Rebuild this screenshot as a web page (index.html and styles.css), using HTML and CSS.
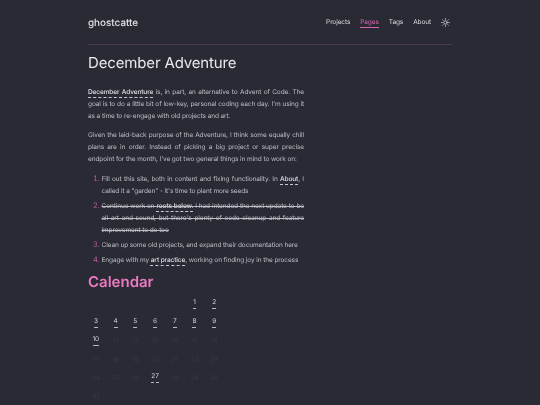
FILE: index.html
```html
<!DOCTYPE html>
<html lang="en">
<head>
<meta charset="utf-8">
<title>December Adventure</title>
<link rel="stylesheet" href="styles.css">
</head>
<body>
<div class="page">
  <header class="top">
    <a class="brand">ghostcatte</a>
    <nav class="nav">
      <a>Projects</a>
      <a class="current">Pages</a>
      <a>Tags</a>
      <a>About</a>
      <svg class="sun" viewBox="0 0 24 24" fill="none" stroke="currentColor" stroke-width="2" stroke-linecap="round"><circle cx="12" cy="12" r="4.5"/><path d="M12 1.5v2M12 20.5v2M1.5 12h2M20.5 12h2M4.6 4.6l1.4 1.4M18 18l1.4 1.4M4.6 19.4L6 18M18 6l1.4-1.4"/></svg>
    </nav>
  </header>
  <main class="content">
    <h1>December Adventure</h1>
    <p><a class="link">December Adventure</a> is, in part, an alternative to Advent of Code. The goal is to do a little bit of low-key, personal coding each day. I'm using it as a time to re-engage with old projects and art.</p>
    <p>Given the laid-back purpose of the Adventure, I think some equally chill plans are in order. Instead of picking a big project or super precise endpoint for the month, I've got two general things in mind to work on:</p>
    <ol>
      <li>Fill out this site, both in content and fixing functionality. In <a class="link">About</a>, I called it a "garden" - it's time to plant more seeds</li>
      <li><s>Continue work on <a class="link">roots below.</a> I had intended the next update to be all art and sound, but there's plenty of code cleanup and feature improvement to do too</s></li>
      <li>Clean up some old projects, and expand their documentation here</li>
      <li>Engage with my <a class="link">art practice</a>, working on finding joy in the process</li>
    </ol>
    <h2>Calendar</h2>
    <div class="calendar">
      <span></span><span></span><span></span><span></span><span></span>
      <a class="day">1</a><a class="day">2</a>
      <a class="day">3</a><a class="day">4</a><a class="day">5</a><a class="day">6</a><a class="day">7</a><a class="day">8</a><a class="day">9</a>
      <a class="day">10</a><span>11</span><span>12</span><span>13</span><span>14</span><span>15</span><span>16</span>
      <span>17</span><span>18</span><span>19</span><span>20</span><span>21</span><span>22</span><span>23</span>
      <span>24</span><span>25</span><span>26</span><a class="day">27</a><span>28</span><span>29</span><span>30</span>
      <span>31</span>
    </div>
  </main>
</div>
</body>
</html>
```
FILE: styles.css
```css
* { box-sizing: border-box; }
html, body { margin: 0; height: 100%; }
body {
  background: #2a2a35;
  color: #bcbcc4;
  font-family: "Inter", "Liberation Sans", sans-serif;
  font-size: 6.5px;
  letter-spacing: -0.1px;
  line-height: 12px;
  overflow: hidden;
  text-rendering: geometricPrecision;
}
.page { width: 364px; margin: 0 auto; will-change: transform; }
.top {
  height: 45px;
  padding-top: 15px;
  display: flex;
  justify-content: space-between;
  align-items: flex-start;
  border-bottom: 1px solid #47394f;
}
.brand { font-size: 9.9px; line-height: 16px; color: #e0e0e6; font-weight: 500; letter-spacing: 0; }
.nav { display: flex; gap: 10px; align-items: center; margin-right: 2px; color: #dcdce2; height: 15px; }
.nav a { line-height: 10.5px; }
.nav .current { color: #d468ae; border-bottom: 1px solid #d468ae; }
.sun { width: 9px; height: 9px; color: #e0e0e6; }
.content { width: 216px; }
h1 { margin: 8px 0 13px; font-size: 15px; line-height: 20px; font-weight: 400; color: #e8e8ee; letter-spacing: -0.15px; }
p { margin: 0 0 7px; text-align: justify; }
p + p { margin-bottom: 7.5px; }
.link {
  color: #e0e0e6;
  font-weight: 500;
  text-decoration: underline dashed 1px #c8c8d0;
  text-underline-offset: 2.5px;
}
ol { margin: 0; padding: 0 0 0 13.5px; }
li { margin-bottom: 3px; text-align: justify; }
li::marker { color: #b8609c; font-size: 7.5px; }
h2 { margin: 6.5px 0 6px; font-size: 15px; line-height: 20px; font-weight: 600; color: #ec7ac2; letter-spacing: 0; }
.calendar {
  width: 138px;
  margin-left: -2px;
  display: grid;
  grid-template-columns: repeat(7, 1fr);
  grid-auto-rows: 18.6px;
  justify-items: center;
  color: #393945;
}
.day { color: #d0d0d6; height: 11px; line-height: 9px; border-bottom: 1px dashed #b8b8c0; }
```
